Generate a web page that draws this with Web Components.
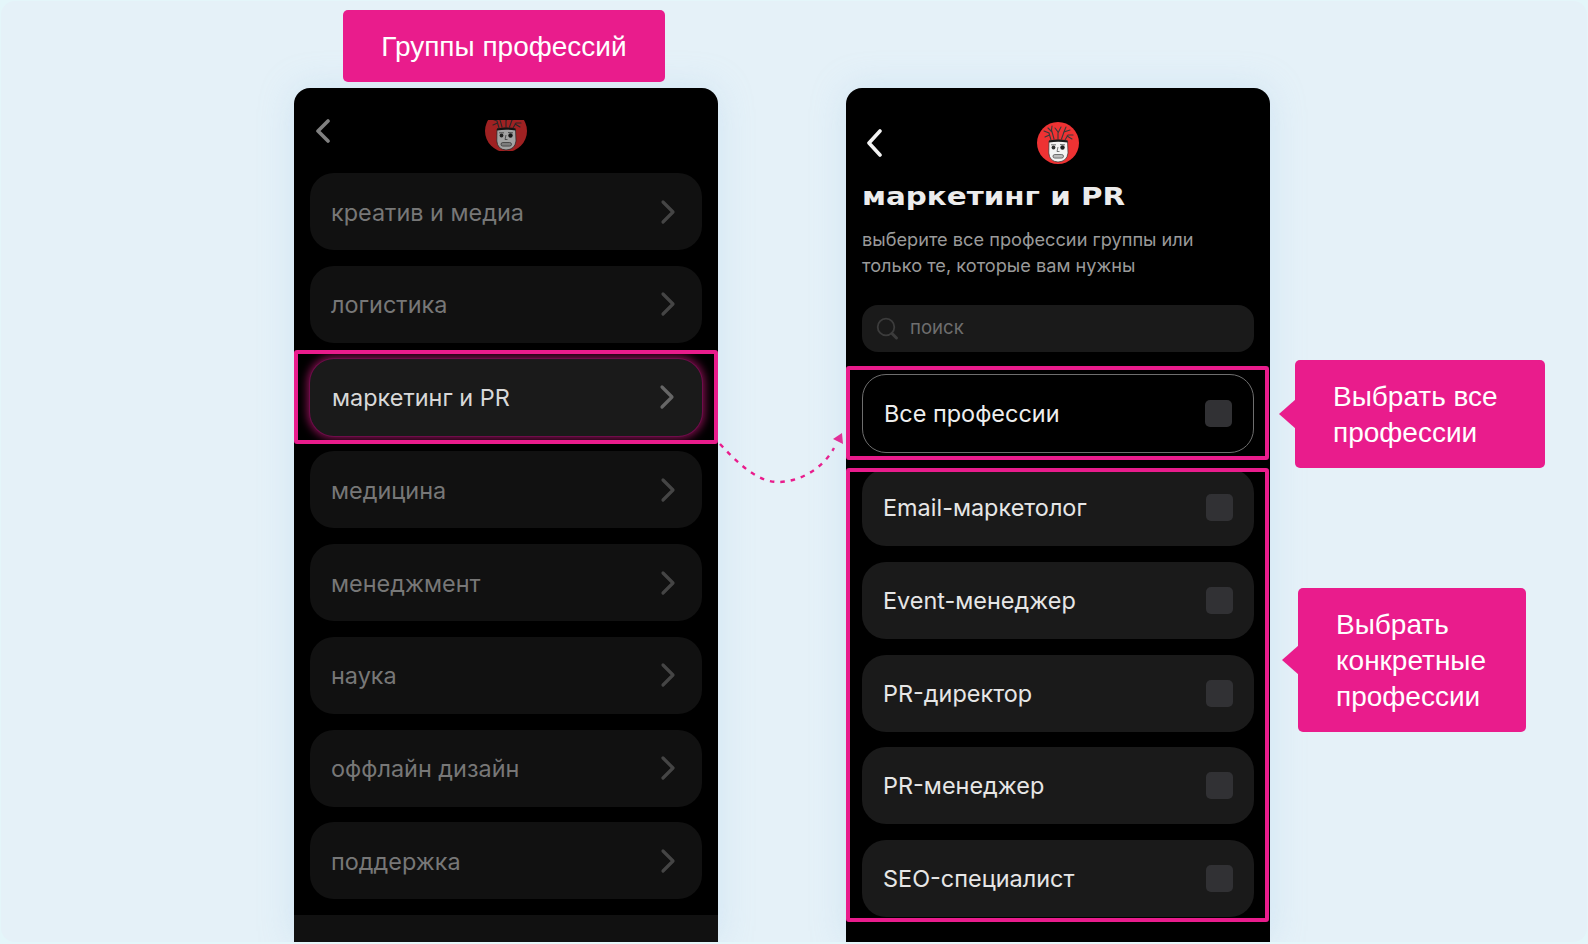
<!doctype html>
<html lang="ru"><head><meta charset="utf-8"><title>Группы профессий</title>
<style>html,body{margin:0;padding:0;background:#E4F6FA}</style></head>
<body>
<app-stage></app-stage>
<script>
const UI='Inter,"Noto Sans",sans-serif';
function def(name,css,html){
  customElements.define(name,class extends HTMLElement{
    constructor(){super();const r=this.attachShadow({mode:'open'});
      r.innerHTML='<style>'+css+'</style>'+html;}
  });
}
const chevR='<svg width="16" height="26" viewBox="0 0 16 26" fill="none"><path d="M3 3 L13 13 L3 23" stroke="currentColor" stroke-width="3.2" stroke-linecap="round" stroke-linejoin="round"/></svg>';

def('face-avatar',':host{display:block;width:42px;height:42px}svg{display:block}',
`<svg width="42" height="42" viewBox="0 0 42 42">
<circle cx="21" cy="21" r="21" fill="#EE3233"/>
<g fill="none" stroke="#3a3a3a" stroke-width="1.100" stroke-linecap="round">
<path d="M14 18 L12 11 L7 9M12.500 13 L8 15"/><path d="M17 17 L14.500 8 L15 4M15 10 L11 6"/><path d="M21 17 L21 10 L18 6M21 11 L24 5"/><path d="M24.500 17 L27 10 L33 8M26.500 11 L29 5"/><path d="M28 18 L31 13 L36 13M30 14 L35 17"/>
</g>
<path d="M12 19 Q21 17 30.500 19 L31 31 Q30 39.500 21 40 Q12.500 39.500 11.800 31 Z" fill="#f4f4f4" stroke="#333" stroke-width=".7"/>
<path d="M12 18.500 Q21 16.500 30.500 18.500 L30.600 20.500 Q21 18.800 12 20.500 Z" fill="#1c1c1c"/>
<circle cx="16.500" cy="25.500" r="1.900" fill="#333"/><circle cx="25.500" cy="25.500" r="2.200" fill="#222"/>
<path d="M14 22.800 L19 22.800M23 22.500 L28 22.800" stroke="#555" stroke-width=".8"/>
<path d="M21 25 L20 29.500 L22.500 29.500" fill="none" stroke="#555" stroke-width=".8"/>
<rect x="16" y="32.500" width="10.500" height="3.600" rx="1.800" fill="#bbb" stroke="#444" stroke-width=".7"/>
</svg>`);

def('nav-row',`:host{display:flex;align-items:center;justify-content:space-between;box-sizing:border-box;height:77px;flex:none;border-radius:24px;background:#111;color:#777;padding:0 26px 0 21px;font:23.450px/28px ${UI}}
.t{padding-top:2px}
:host([active]){background:#1a1a1a;color:#d8d8d8;padding:0 27px 0 22px;box-shadow:0 0 0 1px #6f0c4b,0 0 9px 3px rgba(233,28,140,.55)}
.c{color:#454545;display:flex}:host([active]) .c{color:#666}`,
`<span class="t"><slot></slot></span><span class="c">${chevR}</span>`);

def('check-row',`:host{display:flex;align-items:center;justify-content:space-between;box-sizing:border-box;height:77px;flex:none;border-radius:24px;background:#1a1a1a;color:#e6e6e6;padding:0 21px;font:23.450px/28px ${UI}}
span{padding-top:1px}
:host([outlined]){height:79px;background:#000;border:1px solid #6e6e6e;color:#eee}
i{display:block;width:27px;height:27px;border-radius:5px;background:#313134}`,
`<span><slot></slot></span><i></i>`);

def('mark-box',`:host{display:flex;flex-direction:column;box-sizing:border-box;border:4px solid #E91C8C;border-radius:3px;flex:none;overflow:hidden}`,`<slot></slot>`);

def('pink-note',`:host{display:block;position:relative;box-sizing:border-box;background:#E91C8C;color:#fff;border-radius:5px;font:28px/36px "Liberation Sans",Arial,sans-serif;padding:19px 37px 17px 38px}
:host([tail])::before{content:"";position:absolute;left:-16px;top:50%;width:17px;height:30px;margin-top:-15px;background:#E91C8C;clip-path:polygon(0 50%,100% 0,100% 100%)}`,`<slot></slot>`);

def('search-field',`:host{display:flex;align-items:center;box-sizing:border-box;height:47px;border-radius:16px;background:#1a1a1a;color:#6e6e6e;padding:0 0 0 14px;gap:10px;font:18.600px/22px ${UI}}svg{display:block}span{margin-top:-3px}`,
`<svg width="24" height="24" viewBox="0 0 24 24" fill="none"><circle cx="10" cy="10" r="8.300" stroke="#3c3c3c" stroke-width="1.800"/><path d="M16 16.500 L20.500 21" stroke="#3c3c3c" stroke-width="3" stroke-linecap="round"/></svg><span><slot></slot></span>`);

def('arrow-hop',`:host{display:block;width:128px;padding-top:429px}svg{display:block;overflow:visible}`,
`<svg width="128" height="70" viewBox="0 0 128 70" fill="none"><path d="M2 14 C24 38 42 52 60 52 C80 52 104 40 116 18" stroke="#E91C8C" stroke-width="2.400" stroke-dasharray="4.500 6"/><path d="M124 3 L115 9 L125 14 Z" fill="#E91C8C"/></svg>`);

def('phone-screen',`:host{display:flex;flex-direction:column;box-sizing:border-box;width:424px;background:#000;border-radius:16px 16px 0 0;padding:0 16px;overflow:hidden;box-shadow:0 0 34px rgba(170,205,235,.35);flex:1}`,`<slot></slot>`);

def('app-stage',`:host{display:block;box-sizing:border-box;width:1588px;height:944px;padding:1px;background:#E4F6FA}
.card{display:grid;grid-template-columns:293px 424px 128px 424px 1fr;height:941px;background:#E5F1F8;border-radius:14px;overflow:hidden;font-family:${UI}}
.col{display:flex;flex-direction:column;min-height:0}
.l{padding-top:9px}.r{padding-top:87px}
.top{margin:0 0 6px 49px;width:322px;height:72px;padding:2px 0 0;display:flex;align-items:center;justify-content:center}
.head{display:grid;grid-template-columns:1fr 42px 1fr;height:85px;flex:none}
.back{color:#808080;display:flex;align-items:flex-start;padding-top:31px;box-sizing:border-box;height:85px}
.clip{height:31px;margin-top:32px;overflow:hidden;opacity:.67}
.clip face-avatar{margin-top:-10px}
.list{display:flex;flex-direction:column;gap:15.750px;flex:1;min-height:0}
.list mark-box{margin:-9px -16px -8px;padding:5px 12px 4px}
.bar{flex:1;margin:0 -16px;background:#111}
.head2{display:grid;grid-template-columns:1fr 42px 1fr;margin-top:34px;height:42px;flex:none}
.back2{color:#f2f2f2;display:flex;padding:7px 0 0 3px}
h1{margin:17px 0 0;height:32px;font:700 25px/32px "DejaVu Sans",sans-serif;color:#ececec;white-space:nowrap;transform-origin:0 50%;transform:scaleX(1.175)}
p{margin:13px 0 27px;font:18.200px/26px ${UI};color:#9a9a9a;white-space:nowrap}
.all{margin:14px -15px 0 -16px;padding:4px 11px 3px 12px}
.grp{margin:8px -15px 0 -16px;height:454px;padding:0 11px 0 12px;gap:15.750px}
.grp check-row:first-child{margin-top:-3px}
.notes{display:flex;flex-direction:column;align-items:flex-start}
.n1{margin:359px 0 0 25px;width:250px;height:108px}
.n2{margin:120px 0 0 28px;width:228px;height:144px}
</style><div class="card">
<div></div>
<div class="col l">
  <pink-note class="top">Группы профессий</pink-note>
  <phone-screen>
    <div class="head"><div class="back"><svg style="margin-left:5px" width="18" height="24" viewBox="0 0 18 24" fill="none"><path d="M13 2 L3 12 L13 22" stroke="currentColor" stroke-width="3.600" stroke-linecap="round" stroke-linejoin="round"/></svg></div><div class="clip"><face-avatar></face-avatar></div><div></div></div>
    <div class="list">
      <nav-row>креатив и медиа</nav-row>
      <nav-row>логистика</nav-row>
      <mark-box><nav-row active>маркетинг и PR</nav-row></mark-box>
      <nav-row>медицина</nav-row>
      <nav-row>менеджмент</nav-row>
      <nav-row>наука</nav-row>
      <nav-row>оффлайн дизайн</nav-row>
      <nav-row>поддержка</nav-row>
      <div class="bar"></div>
    </div>
  </phone-screen>
</div>
<arrow-hop></arrow-hop>
<div class="col r">
  <phone-screen>
    <div class="head2"><div class="back2"><svg width="20" height="28" viewBox="0 0 20 28" fill="none"><path d="M15 2 L4 14 L15 26" stroke="currentColor" stroke-width="3.600" stroke-linecap="round" stroke-linejoin="round"/></svg></div><face-avatar></face-avatar><div></div></div>
    <h1>маркетинг и PR</h1>
    <p>выберите все профессии группы или<br>только те, которые вам нужны</p>
    <search-field>поиск</search-field>
    <mark-box class="all"><check-row outlined>Все профессии</check-row></mark-box>
    <mark-box class="grp">
      <check-row>Email-маркетолог</check-row>
      <check-row>Event-менеджер</check-row>
      <check-row>PR-директор</check-row>
      <check-row>PR-менеджер</check-row>
      <check-row>SEO-специалист</check-row>
    </mark-box>
  </phone-screen>
</div>
<div class="notes">
  <pink-note class="n1" tail>Выбрать все<br>профессии</pink-note>
  <pink-note class="n2" tail>Выбрать<br>конкретные<br>профессии</pink-note>
</div>
</div>`);
</script>
</body></html>
